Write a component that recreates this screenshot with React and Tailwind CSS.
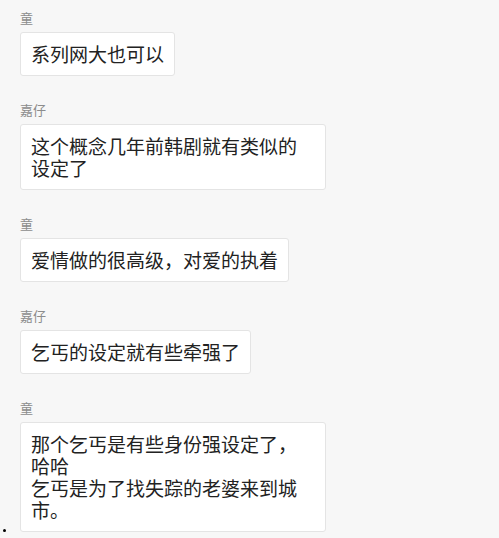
import React from 'react'

const messages = [
    { name: '童', lines: ['系列网大也可以'] },
    { name: '嘉仔', lines: ['这个概念几年前韩剧就有类似的设定了'] },
    { name: '童', lines: ['爱情做的很高级，对爱的执着'] },
    { name: '嘉仔', lines: ['乞丐的设定就有些牵强了'] },
    { name: '童', lines: ['那个乞丐是有些身份强设定了，哈哈', '乞丐是为了找失踪的老婆来到城市。'] },
]

export default function App() {
    return (
        <div
            className="relative w-[499px] h-[538px] overflow-hidden bg-[#f7f7f7] pl-[20px] pt-[10px]"
            style={{ fontFamily: '"Noto Sans CJK SC", "Noto Sans", sans-serif' }}
        >
            {messages.map((m, i) => (
                <div key={i} className={i === 0 ? '' : 'mt-[26px]'}>
                    <div className="text-[13px] leading-[16px] text-[#8c8c8c] mb-[6px]">{m.name}</div>
                    <div className="inline-block max-w-[306px] bg-white border border-[#e4e4e4] rounded-[3px] px-[10px] py-[10px] text-[19px] leading-[22px] text-[#222222]">
                        {m.lines.map((l, j) => (
                            <div key={j}>{l}</div>
                        ))}
                    </div>
                </div>
            ))}
            <div className="absolute left-[3px] top-[529px] w-[3px] h-[3px] rounded-full bg-black" />
        </div>
    )
}
